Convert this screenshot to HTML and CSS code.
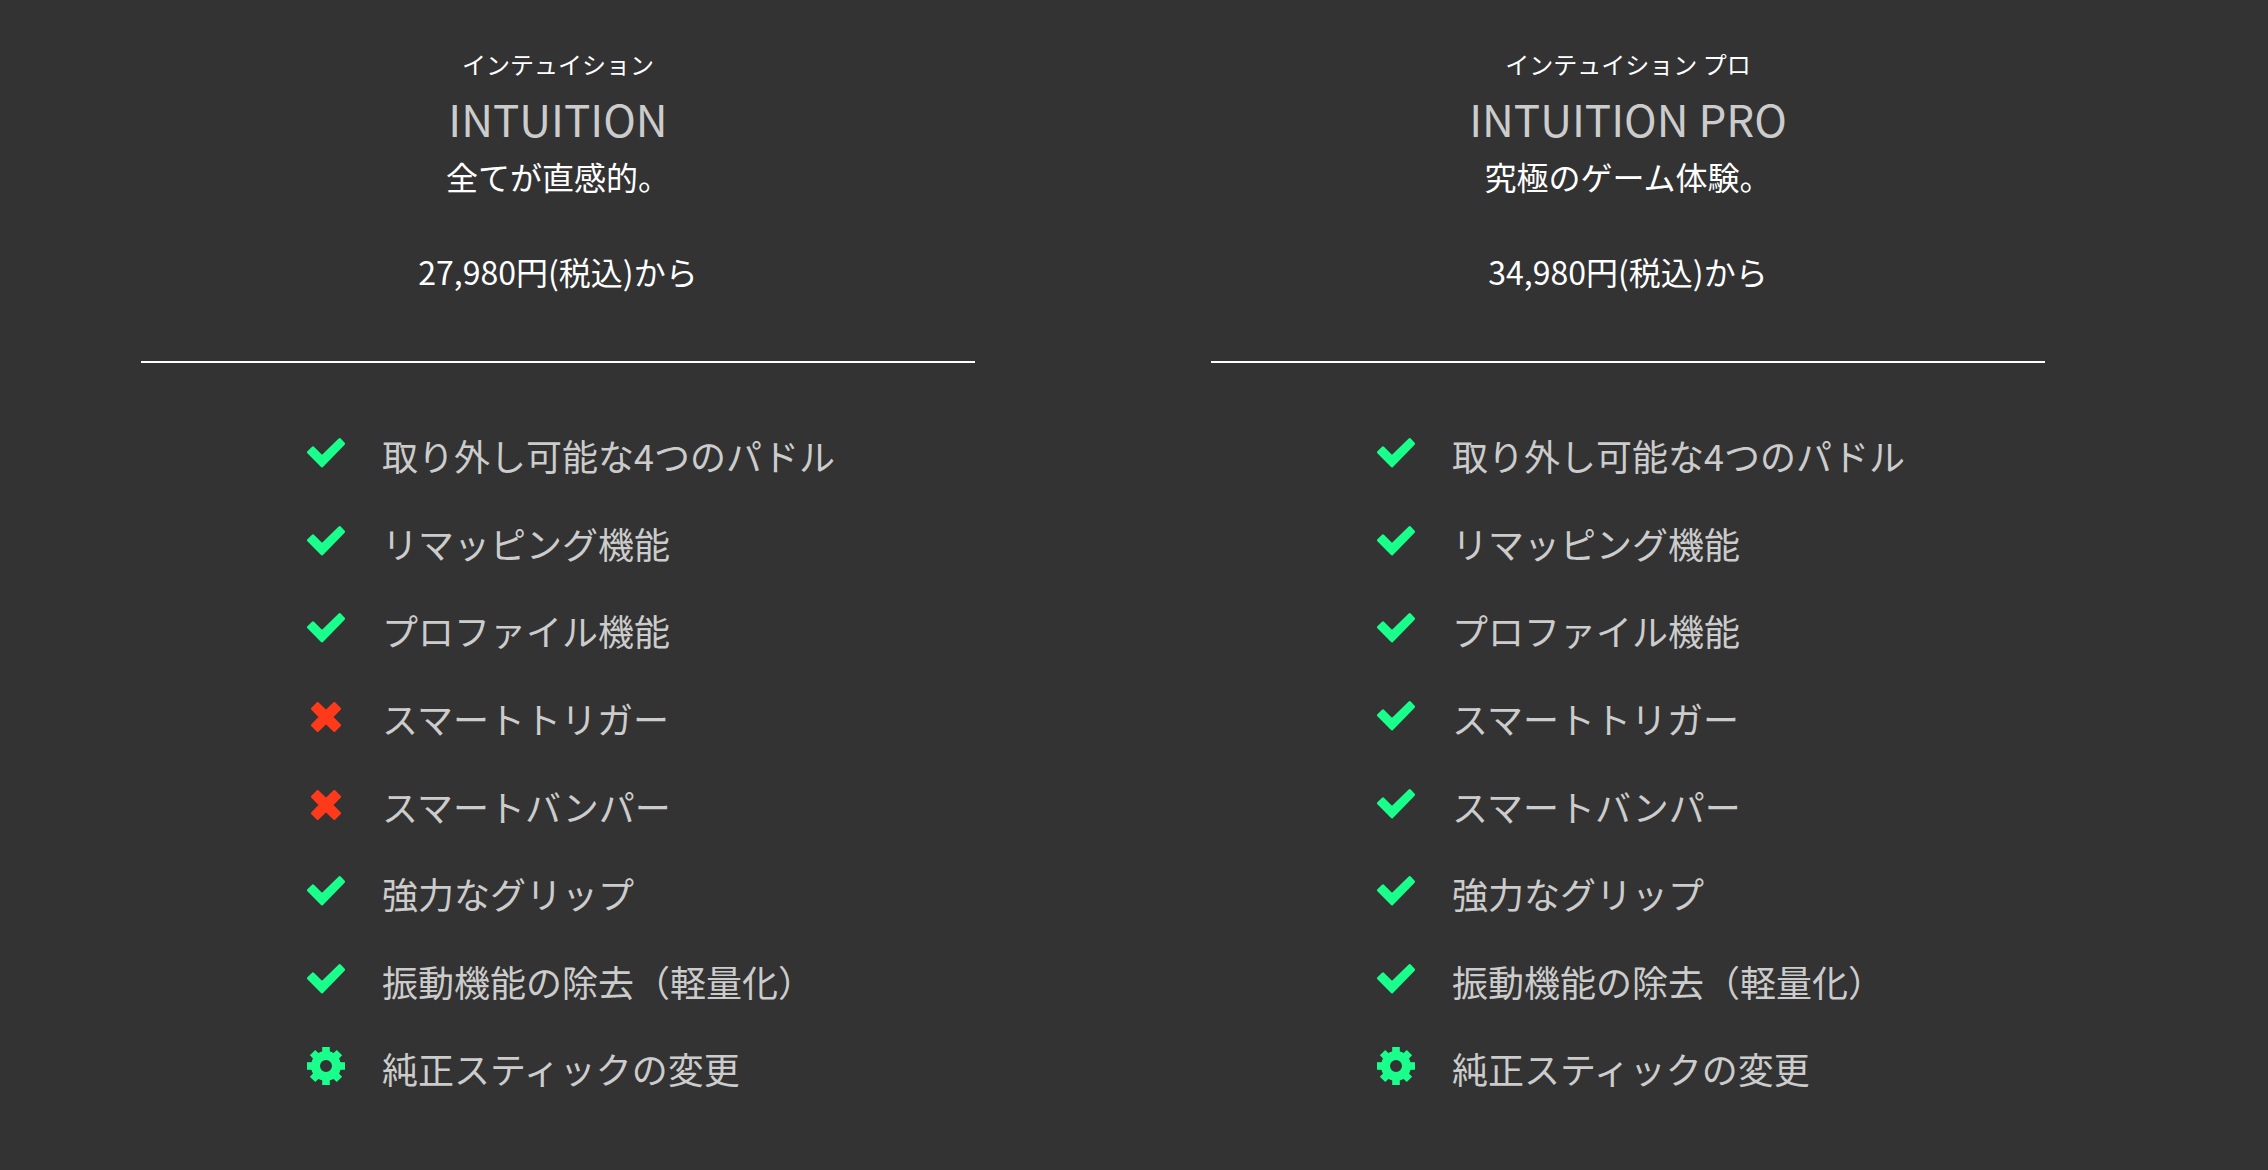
FILE: index.html
```html
<!DOCTYPE html>
<html lang="ja">
<head>
<meta charset="utf-8">
<title>INTUITION</title>
<link rel="stylesheet" href="styles.css">
</head>
<body>
<svg class="defs" width="0" height="0" aria-hidden="true">
  <symbol id="check" viewBox="0 0 38 38"><polygon class="shape" points="1.4,18.3 6,13.7 15,22.7 32.7,5.4 36.6,9.7 15,31.9"/></symbol>
  <symbol id="times" viewBox="0 0 30 30"><polygon class="shape" points="1.4,6.7 6.7,1.4 15,9.4 23.3,1.4 28.6,6.7 20.6,15 28.6,23.3 23.3,28.6 15,20.6 6.7,28.6 1.4,23.3 9.4,15"/></symbol>
  <symbol id="cog" viewBox="0 0 38 38">
    <circle class="cog-ring" cx="19" cy="19" r="10.5"/>
    <rect x="15.2" y="0" width="7.6" height="8"/>
    <rect x="15.2" y="0" width="7.6" height="8" transform="rotate(45 19 19)"/>
    <rect x="15.2" y="0" width="7.6" height="8" transform="rotate(90 19 19)"/>
    <rect x="15.2" y="0" width="7.6" height="8" transform="rotate(135 19 19)"/>
    <rect x="15.2" y="0" width="7.6" height="8" transform="rotate(180 19 19)"/>
    <rect x="15.2" y="0" width="7.6" height="8" transform="rotate(225 19 19)"/>
    <rect x="15.2" y="0" width="7.6" height="8" transform="rotate(270 19 19)"/>
    <rect x="15.2" y="0" width="7.6" height="8" transform="rotate(315 19 19)"/>
  </symbol>
</svg>
<main class="compare">
  <section class="plan">
    <header class="plan-head">
      <p class="kana">インテュイション</p>
      <h2 class="name">INTUITION</h2>
      <p class="tagline">全てが直感的。</p>
      <p class="price">27,980円(税込)から</p>
    </header>
    <ul class="features">
      <li class="feature"><svg class="icon icon-check"><use href="#check"/></svg><span>取り外し可能な4つのパドル</span></li>
      <li class="feature"><svg class="icon icon-check"><use href="#check"/></svg><span>リマッピング機能</span></li>
      <li class="feature"><svg class="icon icon-check"><use href="#check"/></svg><span>プロファイル機能</span></li>
      <li class="feature"><svg class="icon icon-times"><use href="#times"/></svg><span>スマートトリガー</span></li>
      <li class="feature"><svg class="icon icon-times"><use href="#times"/></svg><span>スマートバンパー</span></li>
      <li class="feature"><svg class="icon icon-check"><use href="#check"/></svg><span>強力なグリップ</span></li>
      <li class="feature"><svg class="icon icon-check"><use href="#check"/></svg><span>振動機能の除去（軽量化）</span></li>
      <li class="feature"><svg class="icon icon-cog"><use href="#cog"/></svg><span>純正スティックの変更</span></li>
    </ul>
  </section>
  <section class="plan">
    <header class="plan-head">
      <p class="kana">インテュイション プロ</p>
      <h2 class="name">INTUITION PRO</h2>
      <p class="tagline">究極のゲーム体験。</p>
      <p class="price">34,980円(税込)から</p>
    </header>
    <ul class="features">
      <li class="feature"><svg class="icon icon-check"><use href="#check"/></svg><span>取り外し可能な4つのパドル</span></li>
      <li class="feature"><svg class="icon icon-check"><use href="#check"/></svg><span>リマッピング機能</span></li>
      <li class="feature"><svg class="icon icon-check"><use href="#check"/></svg><span>プロファイル機能</span></li>
      <li class="feature"><svg class="icon icon-check"><use href="#check"/></svg><span>スマートトリガー</span></li>
      <li class="feature"><svg class="icon icon-check"><use href="#check"/></svg><span>スマートバンパー</span></li>
      <li class="feature"><svg class="icon icon-check"><use href="#check"/></svg><span>強力なグリップ</span></li>
      <li class="feature"><svg class="icon icon-check"><use href="#check"/></svg><span>振動機能の除去（軽量化）</span></li>
      <li class="feature"><svg class="icon icon-cog"><use href="#cog"/></svg><span>純正スティックの変更</span></li>
    </ul>
  </section>
</main>
</body>
</html>
```
FILE: styles.css
```css
html, body {
  margin: 0;
  height: 100%;
}
body {
  background: #333;
  overflow: hidden;
  font-family: "Noto Sans CJK JP", "Noto Sans", sans-serif;
  color: #ccc;
}
.defs {
  display: block;
  height: 0;
}
.compare {
  display: grid;
  grid-template-columns: 1070px 1070px;
  padding: 46px 0 0 23px;
}
.plan {
  display: flex;
  flex-direction: column;
  align-items: center;
}
.plan-head {
  width: 834px;
  height: 315px;
  border-bottom: 2px solid #fff;
  text-align: center;
}
.kana {
  margin: 0;
  font-size: 24px;
  line-height: 36px;
  color: #fff;
}
.name {
  margin: 0;
  font-size: 44px;
  font-weight: 400;
  line-height: 72px;
  color: #ccc;
}
.tagline {
  margin: 0;
  font-size: 32px;
  line-height: 44px;
  color: #fff;
}
.price {
  margin: 51px 0 0;
  font-size: 32px;
  line-height: 44px;
  color: #fff;
}
.features {
  list-style: none;
  margin: 48.5px 0 0 284px;
  padding: 0;
  width: 452px;
  align-self: flex-start;
}
.feature {
  display: flex;
  align-items: center;
  height: 87.6px;
  font-size: 36px;
  font-weight: 400;
  gap: 37px;
  white-space: nowrap;
}
.icon {
  width: 38px;
  height: 38px;
  flex: none;
  position: relative;
  top: -2px;
}
.icon-check, .icon-cog {
  fill: #1aff8c;
  stroke: #1aff8c;
}
.icon-times {
  top: -1px;
  fill: #ff3a1a;
  stroke: #ff3a1a;
  padding: 4px;
  box-sizing: border-box;
}
.shape {
  stroke-width: 2.8;
  stroke-linejoin: round;
}
.cog-ring {
  fill: none;
  stroke-width: 9;
}
.icon-cog rect, #cog rect {
  stroke: none;
}
```
